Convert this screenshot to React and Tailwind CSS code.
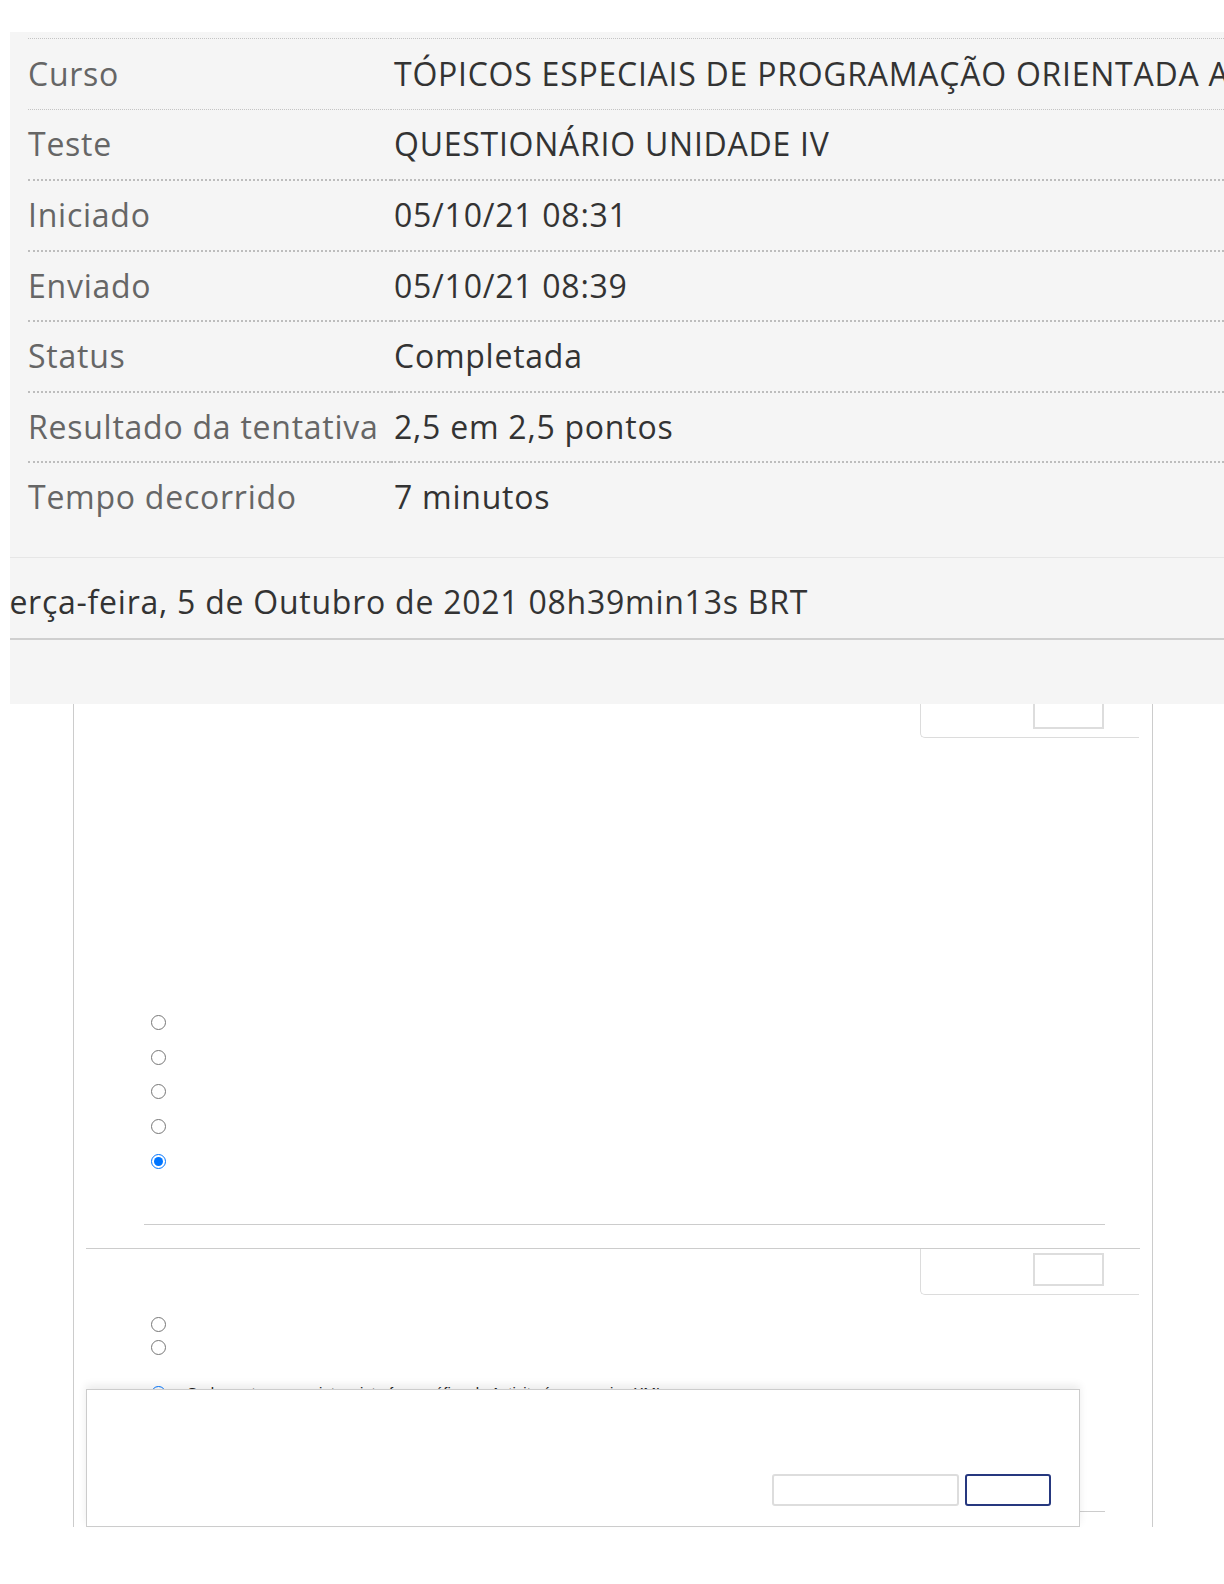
import React from 'react';

const rows = [
  ['Curso', 'TÓPICOS ESPECIAIS DE PROGRAMAÇÃO ORIENTADA A OBJETOS 7211-05_SEI_CC_0719_R_20212'],
  ['Teste', 'QUESTIONÁRIO UNIDADE IV'],
  ['Iniciado', '05/10/21 08:31'],
  ['Enviado', '05/10/21 08:39'],
  ['Status', 'Completada'],
  ['Resultado da tentativa', '2,5 em 2,5 pontos'],
  ['Tempo decorrido', '7 minutos'],
];

// summary table rows (first two separators are the thin ones)
function SummaryRow({ label, value, index }) {
  const line =
    index < 2
      ? 'border-t border-dotted border-[#c4c4c4]'
      : 'border-t-2 border-dotted border-[#bdbdbd]';
  return (
    <div className="flex h-[70.5px]">
      <div className={`w-[363px] shrink-0 flex items-center text-[#666] ${line}`}>{label}</div>
      <div className={`flex-1 flex items-center pl-[3px] text-[#333] whitespace-nowrap ${line}`}>{value}</div>
    </div>
  );
}

function Radio({ name, checked }) {
  return (
    <input
      type="radio"
      name={name}
      defaultChecked={checked}
      className="m-0 w-[15px] h-[15px] shrink-0"
    />
  );
}

function PointsBox({ height, inner }) {
  return (
    <div className="flex justify-end pr-[13px]">
      <div className={`w-[219px] ${height} border-l border-b border-[#dcdcdc] rounded-bl-[5px] pl-[112px]`}>
        {inner}
      </div>
    </div>
  );
}

export default function App() {
  return (
    <div className="min-h-[1584px] bg-white overflow-hidden">
      {/* attempt summary panel */}
      <div className="pt-[32px] pl-[10px]">
        <div
          className="bg-[#f5f5f5] overflow-hidden text-[32px] tracking-[0.75px]"
          style={{ fontFamily: '"Open Sans", "Noto Sans", sans-serif' }}
        >
          <div className="pt-[6px] pl-[18px]">
            {rows.map(([label, value], i) => (
              <SummaryRow key={label} label={label} value={value} index={i} />
            ))}
          </div>
          <div className="mt-[25.5px] border-t border-[#e6e6e6] pt-[24px] pb-[16px] border-b-2 border-b-[#cfcfcf]">
            <div className="leading-[40px] text-[#333] whitespace-nowrap -ml-[19px]">
              Terça-feira, 5 de Outubro de 2021 08h39min13s BRT
            </div>
          </div>
          <div className="h-[64px]" />
        </div>
      </div>

      {/* question area under the panel */}
      <div
        className="relative ml-[73px] w-[1080px] h-[823px] border-x border-[#cccccc]"
        style={{ fontFamily: '"Liberation Sans", Arial, sans-serif' }}
      >
        <PointsBox
          height="h-[34px]"
          inner={<div className="w-[71px] h-[25px] border-2 border-t-0 border-[#dddddd]" />}
        />

        <div className="mt-[267px] pl-[76.5px] flex flex-col">
          {[0, 1, 2, 3, 4].map((i) => (
            <div key={i} className="h-[34.7px] flex items-center">
              <Radio name="q1" checked={i === 4} />
            </div>
          ))}
        </div>

        <div className="mt-[46px] ml-[70px] w-[961px] h-px bg-[#cccccc]" />
        <div className="mt-[23px] ml-[12px] w-[1054px] h-px bg-[#cccccc]" />

        <PointsBox
          height="h-[46px] pt-[4px]"
          inner={<div className="w-[71px] h-[33px] border-2 border-[#dddddd]" />}
        />

        <div className="mt-[17.5px] pl-[76.5px] flex flex-col">
          <div className="h-[23px] flex items-center">
            <Radio name="q2" />
          </div>
          <div className="h-[23px] flex items-center">
            <Radio name="q2" />
          </div>
          <div className="mt-[23px] h-[23px] flex items-center gap-[21px]">
            <Radio name="q2" checked />
            <span className="text-[15px] text-[#222] whitespace-nowrap">
              O elemento que projeta a interface gráfica do Activity é um arquivo XML.
            </span>
          </div>
        </div>

        <div className="mt-[106.5px] ml-[70px] w-[961px] h-px bg-[#cccccc]" />

        {/* confirmation dialog lying over the question */}
        <div className="absolute top-[685px] left-[12px] w-[994px] h-[138px] bg-white border border-[#cccccc] shadow-[0_-4px_8px_rgba(0,0,0,0.08)] flex items-end justify-end gap-[6px] pr-[28px] pb-[20px]">
          <button className="w-[187px] h-[32px] border-2 border-[#dddddd] rounded-[3px] bg-white" />
          <button className="w-[86px] h-[32px] border-2 border-[#26387f] rounded-[3px] bg-white" />
        </div>
      </div>
    </div>
  );
}
